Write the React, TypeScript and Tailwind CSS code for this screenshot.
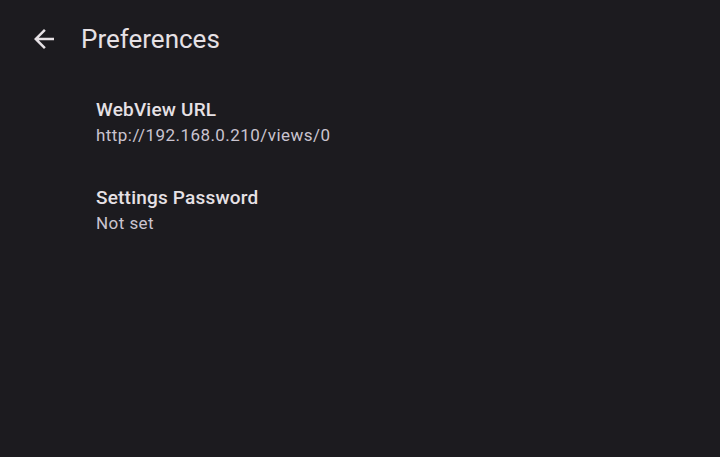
export default function App() {
  return (
    <div className="w-[720px] h-[457px] bg-[#1c1b1f] flex flex-col" style={{ fontFamily: "Roboto, 'Noto Sans', sans-serif" }}>
      <div className="h-[78px] flex items-center">
        <div className="w-[30px] h-[30px] ml-[29px] text-[#e6e1e5]">
          <svg viewBox="0 0 24 24" width="30" height="30" fill="currentColor">
            <path d="M20 11H7.83l5.59-5.59L12 4l-8 8 8 8 1.41-1.41L7.83 13H20v-2z" />
          </svg>
        </div>
        <div className="ml-[22px] text-[26px] leading-[32px] text-[#e6e1e5]">Preferences</div>
      </div>
      <div className="flex flex-col pl-[96px]">
        <div className="h-[88px] flex flex-col justify-center">
          <div className="text-[19px] leading-[26px] font-medium tracking-[0.2px] text-[#e6e1e5]">WebView URL</div>
          <div className="text-[17px] leading-[24px] tracking-[0.45px] text-[#cac4d0]">http://192.168.0.210/views/0</div>
        </div>
        <div className="h-[88px] flex flex-col justify-center">
          <div className="text-[19px] leading-[26px] font-medium tracking-[0.2px] text-[#e6e1e5]">Settings Password</div>
          <div className="text-[17px] leading-[24px] tracking-[0.45px] text-[#cac4d0]">Not set</div>
        </div>
      </div>
    </div>
  );
}
